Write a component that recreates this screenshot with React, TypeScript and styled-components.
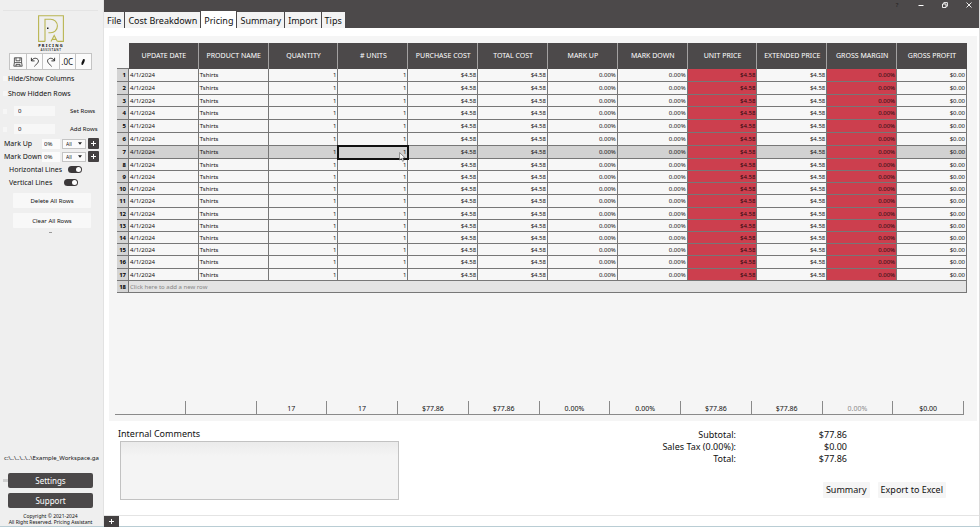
import React from 'react';
import styled, { createGlobalStyle, css } from 'styled-components';

const GlobalStyle = createGlobalStyle`
  *, *::before, *::after { box-sizing: border-box; }
  html, body, #root { height: 100%; }
  body {
    margin: 0;
    background: #fff;
    color: #111;
    font-family: "Noto Sans", "Open Sans", sans-serif;
    font-size: 8px;
    line-height: 12px;
  }
  button, input, select, textarea { font: inherit; color: inherit; margin: 0; }
`;

const Window = styled.div`
  display: grid;
  grid-template-columns: 104px minmax(0, 1fr);
  min-height: 100vh;
  border-bottom: 1px solid #b9cdd4;
`;

/* ---------- sidebar ---------- */

const Sidebar = styled.aside`
  display: flex;
  flex-direction: column;
  min-width: 0;
  padding: 10px 5px 1px 3px;
  background: #efefef;
  border-right: 1px solid #e2e2e2;
`;

const LogoArea = styled.div`
  display: flex;
  justify-content: center;
  height: 43px;
  padding-top: 4px;
  border-top: 1px solid #e4e4e4;
`;

const IconBar = styled.div`
  display: grid;
  grid-template-columns: repeat(5, 1fr);
  height: 17px;
  margin: 0 6px 1px 6px;
  border: 1px solid #c4c4c4;
`;

const IconButton = styled.button`
  display: flex;
  align-items: center;
  justify-content: center;
  padding: 0;
  border: 0;
  background: #fbfbfb;
  font-size: 8px;
  & + & { border-left: 1px solid #c4c4c4; }
`;

const CheckRow = styled.label`
  display: flex;
  align-items: center;
  height: 15px;
  gap: 1px;
  white-space: nowrap;
  font-size: 7px;
`;

const Tick = styled.input`
  appearance: none;
  flex: none;
  width: 4px;
  height: 5px;
  background: #f6f6f6;
`;

const CountRows = styled.div`
  display: grid;
  gap: 6px;
  padding: 4px 0 2px;
`;

const CountRow = styled.div`
  display: flex;
  align-items: center;
  height: 12px;
  font-size: 6px;
`;

const CountInput = styled.input`
  width: 41px;
  height: 10px;
  margin: 0 15px 0 7px;
  padding: 0 4px;
  border: 0;
  background: #f7f7f7;
`;

const LinkButton = styled.button`
  padding: 0;
  border: 0;
  background: none;
  white-space: nowrap;
`;

const MarkRow = styled.div`
  display: grid;
  grid-template-columns: 36px 18px 24px 11px;
  column-gap: 2px;
  align-items: center;
  height: 13px;
  font-size: 7px;
  padding-left: 1px;
  white-space: nowrap;
`;

const PercentInput = styled.input`
  width: 100%;
  height: 10px;
  padding: 0 2px;
  border: 0;
  background: #fbfbfb;
  font-size: 6px;
`;

const SelectBox = styled.div`
  display: grid;
  align-items: center;
  height: 10px;
  border: 1px solid #c4c4c4;
  background: #fbfbfb;
  & > * { grid-area: 1 / 1; }
  & > svg { justify-self: end; margin-right: 3px; pointer-events: none; }
`;

const Select = styled.select`
  appearance: none;
  width: 100%;
  height: 8px;
  padding: 0 3px;
  border: 0;
  background: none;
  font-size: 5px;
  line-height: 8px;
`;

const PlusButton = styled.button<{ $wide?: boolean }>`
  display: flex;
  align-items: center;
  justify-content: center;
  width: ${(p) => (p.$wide ? '15px' : '11px')};
  height: 11px;
  padding: 0;
  border: 0;
  border-radius: ${(p) => (p.$wide ? '0' : '1px')};
  background: #444142;
`;

const SwitchRow = styled.label<{ $gap: number }>`
  display: flex;
  align-items: center;
  gap: ${(p) => p.$gap}px;
  height: 13px;
  padding-left: 6px;
  white-space: nowrap;
  font-size: 7px;
`;

const Switch = styled.input`
  appearance: none;
  flex: none;
  display: flex;
  align-items: center;
  justify-content: flex-end;
  width: 14px;
  height: 7px;
  padding: 1px;
  border-radius: 4px;
  background: #3b3839;
  &::after {
    content: '';
    width: 5px;
    height: 5px;
    border-radius: 50%;
    background: #fff;
  }
`;

const RowActions = styled.div`
  display: grid;
  gap: 5px;
  margin: 4px 7px 0 10px;
`;

const SoftButton = styled.button`
  height: 15px;
  padding: 0;
  border: 0;
  border-radius: 1px;
  background: #f8f8f8;
  font-size: 6px;
`;

const Dash = styled.span`
  width: 3px;
  height: 1px;
  margin: 4px auto 0;
  background: #999;
`;

const Workspace = styled.div`
  margin: auto 0 9px;
  padding-left: 1px;
  white-space: nowrap;
  font-size: 6px;
`;

const SidebarActions = styled.div`
  display: grid;
  grid-template-columns: 5px minmax(0, 1fr);
  row-gap: 5px;
  align-items: center;
  margin: 0 5px 5px 0;
`;

const Handle = styled.span`
  width: 5px;
  height: 3px;
  background: #cfcfcf;
`;

const DarkButton = styled.button`
  grid-column: 2;
  height: 15px;
  padding: 0;
  border: 0;
  border-radius: 2px;
  background: #4b4849;
  color: #fff;
  font-size: 8px;
  line-height: 12px;
`;

const Copyright = styled.p`
  margin: 0;
  text-align: center;
  white-space: nowrap;
  font-size: 5px;
  line-height: 6px;
`;

/* ---------- main ---------- */

const Main = styled.main`
  display: flex;
  flex-direction: column;
  min-width: 0;
  border-right: 1px solid #dcdcdc;
`;

const TitleBar = styled.header`
  display: flex;
  align-items: flex-end;
  justify-content: space-between;
  height: 28px;
  background: #4c494a;
`;

const Tabs = styled.nav`
  display: flex;
  align-items: flex-end;
`;

const Tab = styled.button<{ $active?: boolean }>`
  height: 16px;
  padding: 1px 3px 0;
  border: 0;
  border-right: 1px solid #4c494a;
  background: #f3f3f3;
  font-size: 9px;
  line-height: 15px;
  white-space: nowrap;
  ${(p) => p.$active && css`
    height: 17px;
    background: #fff;
  `}
`;

const WindowControls = styled.div`
  display: flex;
  align-self: flex-start;
  padding: 1px 6px 0 0;
  gap: 16px;
`;

const ControlButton = styled.button`
  display: flex;
  align-items: center;
  justify-content: center;
  width: 8px;
  height: 8px;
  padding: 0;
  border: 0;
  background: none;
  color: #1f1d1d;
  font-size: 6px;
`;

const Panel = styled.section`
  display: flex;
  flex-direction: column;
  flex: 1;
  margin: 8px 2px 0 5px;
  padding: 7px 10px 6px 8px;
  background: #f5f5f5;
`;

const Table = styled.table`
  width: 100%;
  table-layout: fixed;
  border-collapse: separate;
  border-spacing: 0;
  font-size: 6px;
  line-height: 10px;
`;

const CornerCell = styled.td`
  width: 12px;
  padding: 0;
  border-bottom: 1px solid #777;
`;

const HeadCell = styled.th`
  height: 26px;
  padding: 0 0 0 1px;
  background: #4c494a;
  border-right: 1px solid #a3a1a1;
  color: #fff;
  font-size: 7px;
  font-weight: 400;
  white-space: nowrap;
  &:last-child { border-right-color: #4c494a; }
`;

const Row = styled.tr<{ $tall?: boolean; $current?: boolean }>`
  height: ${(p) => (p.$tall ? '13px' : '12px')};
  background: ${(p) => (p.$current ? '#d2d2d2' : '#f7f7f7')};
`;

const RowNumber = styled.th`
  padding: 0 2px 0 0;
  background: #d4d4d4;
  border-right: 1px solid #777;
  border-bottom: 1px solid #777;
  text-align: right;
  font-weight: 700;
  color: #000;
`;

const Cell = styled.td<{ $align?: 'left' | 'right'; $alert?: boolean; $selected?: boolean }>`
  padding: 0 1px;
  border-right: 1px solid #777;
  border-bottom: 1px solid #777;
  text-align: ${(p) => p.$align ?? 'right'};
  white-space: nowrap;
  ${(p) => p.$alert && css`
    background: #cc3f4e;
    color: #260a0e;
  `}
  ${(p) => p.$selected && css`
    position: relative;
    outline: 2px solid #111;
    outline-offset: -1px;
  `}
`;

const NewRowCell = styled.td`
  padding: 0 1px;
  background: #e3e3e3;
  border-right: 1px solid #777;
  border-bottom: 1px solid #777;
  color: #858585;
`;

const Pointer = styled.svg`
  position: absolute;
  right: 1px;
  top: 6px;
  z-index: 1;
`;

const Totals = styled.div`
  display: grid;
  grid-template-columns: repeat(12, 1fr);
  margin: auto 3px 0 -2px;
  border-bottom: 1px solid #8a8a8a;
`;

const Total = styled.div<{ $muted?: boolean }>`
  height: 13px;
  padding-top: 2px;
  border-right: 1px solid #8a8a8a;
  text-align: center;
  font-size: 7px;
  color: ${(p) => (p.$muted ? '#8d8d8d' : 'inherit')};
`;

const Footer = styled.section`
  display: grid;
  grid-template-columns: minmax(0, 279px) minmax(0, 1fr);
  height: 94px;
  padding: 7px 33px 0 14px;
  font-size: 9px;
`;

const Comments = styled.div`
  display: flex;
  flex-direction: column;
`;

const CommentBox = styled.textarea`
  width: 100%;
  height: 59px;
  margin: 1px 0 0 2px;
  border: 1px solid #c2c2c2;
  background: linear-gradient(#ebebeb, #f4f4f4 14px);
  resize: none;
`;

const Summary = styled.div`
  display: flex;
  flex-direction: column;
  align-items: flex-end;
  gap: 17px;
  padding-top: 1px;
`;

const Amounts = styled.dl`
  display: grid;
  grid-template-columns: auto 111px;
  margin: 0 99px 0 0;
  line-height: 12px;
  text-align: right;
  & > * { margin: 0; }
`;

const Actions = styled.div`
  display: flex;
  gap: 8px;
`;

const ActionButton = styled.button`
  height: 16px;
  padding: 0 3px;
  border: 0;
  border-radius: 1px;
  background: #f5f5f5;
  line-height: 14px;
  white-space: nowrap;
`;

const StatusBar = styled.footer`
  display: flex;
  height: 11px;
  border-top: 1px solid #e4e4e4;
`;

/* ---------- drawings ---------- */

const Logo = () => (
  <svg width="30" height="36" viewBox="0 0 30 36" role="img" aria-label="Pricing Assistant">
    <g fill="none" stroke="#b9b552" strokeWidth="1.1">
      <path d="M9 26.4H2.6V.7H27.4V26.4H21.4" />
      <path d="M9 26.4V4.2H14.6a6.8 6.8 0 0 1 0 13.6H12.4" />
      <path d="M15 26.4L18.2 20.4L21.4 26.4M16.2 24.4H20.2" />
    </g>
    <rect x="11" y="12.5" width="1.5" height="1.5" fill="#222" />
    <text x="15" y="32" textAnchor="middle" fontSize="4" fontWeight="800" letterSpacing="1.2" fill="#222">PRICING</text>
    <text x="15" y="35.5" textAnchor="middle" fontSize="3" fontWeight="600" letterSpacing="0.6" fill="#333">ASSISTANT</text>
  </svg>
);

const SaveIcon = () => (
  <svg width="10" height="10" viewBox="0 0 10 10" fill="none" stroke="#333" strokeWidth="0.8">
    <path d="M1.4 .8H8.6V5.6H1.4zM3 .8V3.8H7V.8M1.4 5.6L.8 9.2H9.2L8.6 5.6M3 9.2V7.4H7V9.2" />
  </svg>
);

const TurnIcon = ({ redo }: { redo?: boolean }) => (
  <svg width="10" height="10" viewBox="0 0 10 10" fill="none" stroke="#222" strokeWidth="0.9">
    {redo ? (
      <path d="M8.6 .8V3.9H5.4M8.4 3.7C7 .9 3.6.5 2 2.6C.6 4.6 2.6 6.4 5.6 9.4" />
    ) : (
      <path d="M1.4 .8V3.9H4.6M1.6 3.7C3 .9 6.4.5 8 2.6C9.4 4.6 7.4 6.4 4.4 9.4" />
    )}
  </svg>
);

const EraserIcon = () => (
  <svg width="6" height="8" viewBox="0 0 6 8">
    <path d="M3.2 1L5 1.4L4.4 4L2.8 7L1.3 6.5L1.7 4.2Z" fill="#111" />
  </svg>
);

const PlusIcon = () => (
  <svg width="7" height="7" viewBox="0 0 7 7" stroke="#fff" strokeWidth="1">
    <path d="M3.5 1V6M1 3.5H6" />
  </svg>
);

const Caret = () => (
  <svg width="4" height="3" viewBox="0 0 4 3"><path d="M0 .3H4L2 2.8z" fill="#222" /></svg>
);

/* ---------- data ---------- */

type Column = { title: string; value: string; total: string; align?: 'left'; alert?: boolean; muted?: boolean };

const columns: Column[] = [
  { title: 'UPDATE DATE', value: '4/1/2024', total: '', align: 'left' },
  { title: 'PRODUCT NAME', value: 'Tshirts', total: '', align: 'left' },
  { title: 'QUANTITY', value: '1', total: '17' },
  { title: '# UNITS', value: '1', total: '17' },
  { title: 'PURCHASE COST', value: '$4.58', total: '$77.86' },
  { title: 'TOTAL COST', value: '$4.58', total: '$77.86' },
  { title: 'MARK UP', value: '0.00%', total: '0.00%' },
  { title: 'MARK DOWN', value: '0.00%', total: '0.00%' },
  { title: 'UNIT PRICE', value: '$4.58', total: '$77.86', alert: true },
  { title: 'EXTENDED PRICE', value: '$4.58', total: '$77.86' },
  { title: 'GROSS MARGIN', value: '0.00%', total: '0.00%', alert: true, muted: true },
  { title: 'GROSS PROFIT', value: '$0.00', total: '$0.00' },
];

const tabs = ['File', 'Cost Breakdown', 'Pricing', 'Summary', 'Import', 'Tips'];
const rowNumbers = Array.from({ length: 17 }, (_, i) => i + 1);
const CURRENT_ROW = 7;
const CURRENT_COLUMN = '# UNITS';
const TALL_ROWS = [1, 2, 4, 5, 6, 7, 11, 16];

const MarkControl = ({ name }: { name: string }) => {
  const id = name.replace(' ', '-').toLowerCase();
  return (
    <MarkRow>
      <label htmlFor={id}>{name}</label>
      <PercentInput id={id} defaultValue="0%" />
      <SelectBox>
        <Select aria-label={`${name} scope`} defaultValue="All">
          <option>All</option>
        </Select>
        <Caret />
      </SelectBox>
      <PlusButton aria-label={`Apply ${name}`}><PlusIcon /></PlusButton>
    </MarkRow>
  );
};

export default function App() {
  return (
    <>
      <GlobalStyle />
      <Window>
        <Sidebar>
          <LogoArea><Logo /></LogoArea>
          <IconBar>
            <IconButton aria-label="Save"><SaveIcon /></IconButton>
            <IconButton aria-label="Undo"><TurnIcon /></IconButton>
            <IconButton aria-label="Redo"><TurnIcon redo /></IconButton>
            <IconButton>.0C</IconButton>
            <IconButton aria-label="Clear"><EraserIcon /></IconButton>
          </IconBar>
          <CheckRow><Tick type="checkbox" />Hide/Show Columns</CheckRow>
          <CheckRow><Tick type="checkbox" />Show Hidden Rows</CheckRow>
          <CountRows>
            {['Set Rows', 'Add Rows'].map((name) => (
              <CountRow key={name}>
                <Tick type="checkbox" aria-label={`Enable ${name}`} />
                <CountInput aria-label={`${name} count`} defaultValue="0" />
                <LinkButton>{name}</LinkButton>
              </CountRow>
            ))}
          </CountRows>
          <MarkControl name="Mark Up" />
          <MarkControl name="Mark Down" />
          <SwitchRow $gap={6}>Horizontal Lines<Switch type="checkbox" role="switch" defaultChecked /></SwitchRow>
          <SwitchRow $gap={12}>Vertical Lines<Switch type="checkbox" role="switch" defaultChecked /></SwitchRow>
          <RowActions>
            <SoftButton>Delete All Rows</SoftButton>
            <SoftButton>Clear All Rows</SoftButton>
          </RowActions>
          <Dash />
          <Workspace>c:\..\..\..\..\Example_Workspace.ga</Workspace>
          <SidebarActions>
            <Handle />
            <DarkButton>Settings</DarkButton>
            <DarkButton>Support</DarkButton>
          </SidebarActions>
          <Copyright>
            Copyright © 2021-2024<br />All Right Reserved. Pricing Assistant
          </Copyright>
        </Sidebar>

        <Main>
          <TitleBar>
            <Tabs>
              {tabs.map((t) => <Tab key={t} $active={t === 'Pricing'}>{t}</Tab>)}
            </Tabs>
            <WindowControls>
              <ControlButton aria-label="Help">?</ControlButton>
              <ControlButton aria-label="Minimize">
                <svg width="6" height="6" viewBox="0 0 6 6"><path d="M.5 3.5H5.5" stroke="#fff" /></svg>
              </ControlButton>
              <ControlButton aria-label="Restore">
                <svg width="6" height="6" viewBox="0 0 6 6" fill="none" stroke="#fff" strokeWidth="0.9">
                  <path d="M.5 2H4V5.5H.5zM1.8 2V.6H5.4V4.2H4" />
                </svg>
              </ControlButton>
              <ControlButton aria-label="Close">
                <svg width="6" height="6" viewBox="0 0 6 6" stroke="#fff" strokeWidth="0.9"><path d="M.5.5L5.5 5.5M5.5.5L.5 5.5" /></svg>
              </ControlButton>
            </WindowControls>
          </TitleBar>

          <Panel>
            <Table>
              <thead>
                <tr>
                  <CornerCell />
                  {columns.map((c) => <HeadCell key={c.title} scope="col">{c.title}</HeadCell>)}
                </tr>
              </thead>
              <tbody>
                {rowNumbers.map((n) => (
                  <Row key={n} $tall={TALL_ROWS.includes(n)} $current={n === CURRENT_ROW}>
                    <RowNumber scope="row">{n}</RowNumber>
                    {columns.map((c) => {
                      const selected = n === CURRENT_ROW && c.title === CURRENT_COLUMN;
                      return (
                        <Cell key={c.title} $align={c.align} $alert={c.alert} $selected={selected}>
                          {c.value}
                          {selected && (
                            <Pointer width="7" height="10" viewBox="0 0 7 10" aria-hidden="true">
                              <path d="M.6.6V8L2.4 6.4L3.6 9.3L4.9 8.7L3.7 6H6.2z" fill="#fff" stroke="#555" strokeWidth="0.6" />
                            </Pointer>
                          )}
                        </Cell>
                      );
                    })}
                  </Row>
                ))}
                <Row>
                  <RowNumber scope="row">18</RowNumber>
                  <NewRowCell colSpan={columns.length}>Click here to add a new row</NewRowCell>
                </Row>
              </tbody>
            </Table>
            <Totals>
              {columns.map((c) => <Total key={c.title} $muted={c.muted}>{c.total}</Total>)}
            </Totals>
          </Panel>

          <Footer>
            <Comments>
              <label htmlFor="comments">Internal Comments</label>
              <CommentBox id="comments" />
            </Comments>
            <Summary>
              <Amounts>
                <dt>Subtotal:</dt><dd>$77.86</dd>
                <dt>Sales Tax (0.00%):</dt><dd>$0.00</dd>
                <dt>Total:</dt><dd>$77.86</dd>
              </Amounts>
              <Actions>
                <ActionButton>Summary</ActionButton>
                <ActionButton>Export to Excel</ActionButton>
              </Actions>
            </Summary>
          </Footer>

          <StatusBar>
            <PlusButton $wide aria-label="Add sheet"><PlusIcon /></PlusButton>
          </StatusBar>
        </Main>
      </Window>
    </>
  );
}
